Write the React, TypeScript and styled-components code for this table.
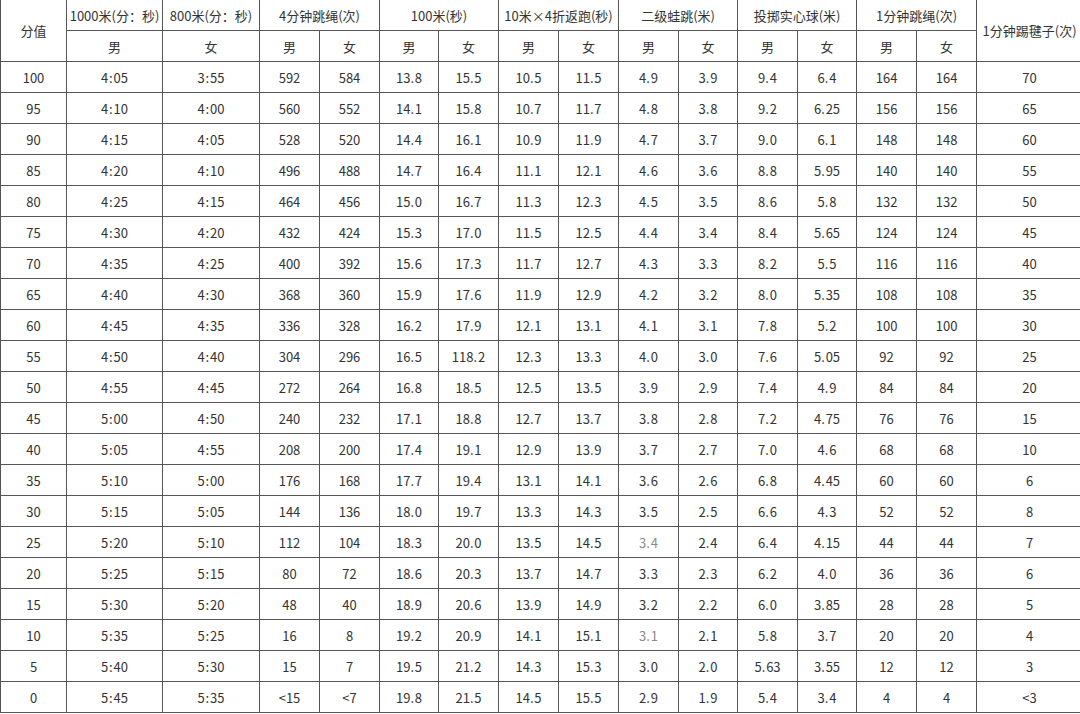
import React from 'react'
import styled, { createGlobalStyle } from 'styled-components'

const GlobalStyle = createGlobalStyle`
  html, body {
    margin: 0;
    padding: 0;
    background: #ffffff;
    overflow: hidden;
  }
  body {
    font-family: "Noto Sans CJK SC", "Noto Sans", sans-serif;
    color: #333333;
  }
`

const widths = [66, 96, 97, 60, 60, 59, 60, 60, 60, 60, 59, 60, 59, 60, 60, 106]

// light = the two cells that look paler in the scan
type Cell = string | { v: string; light: boolean }

const rows: Cell[][] = [
  ['100', '4:05', '3:55', '592', '584', '13.8', '15.5', '10.5', '11.5', '4.9', '3.9', '9.4', '6.4', '164', '164', '70'],
  ['95', '4:10', '4:00', '560', '552', '14.1', '15.8', '10.7', '11.7', '4.8', '3.8', '9.2', '6.25', '156', '156', '65'],
  ['90', '4:15', '4:05', '528', '520', '14.4', '16.1', '10.9', '11.9', '4.7', '3.7', '9.0', '6.1', '148', '148', '60'],
  ['85', '4:20', '4:10', '496', '488', '14.7', '16.4', '11.1', '12.1', '4.6', '3.6', '8.8', '5.95', '140', '140', '55'],
  ['80', '4:25', '4:15', '464', '456', '15.0', '16.7', '11.3', '12.3', '4.5', '3.5', '8.6', '5.8', '132', '132', '50'],
  ['75', '4:30', '4:20', '432', '424', '15.3', '17.0', '11.5', '12.5', '4.4', '3.4', '8.4', '5.65', '124', '124', '45'],
  ['70', '4:35', '4:25', '400', '392', '15.6', '17.3', '11.7', '12.7', '4.3', '3.3', '8.2', '5.5', '116', '116', '40'],
  ['65', '4:40', '4:30', '368', '360', '15.9', '17.6', '11.9', '12.9', '4.2', '3.2', '8.0', '5.35', '108', '108', '35'],
  ['60', '4:45', '4:35', '336', '328', '16.2', '17.9', '12.1', '13.1', '4.1', '3.1', '7.8', '5.2', '100', '100', '30'],
  ['55', '4:50', '4:40', '304', '296', '16.5', '118.2', '12.3', '13.3', '4.0', '3.0', '7.6', '5.05', '92', '92', '25'],
  ['50', '4:55', '4:45', '272', '264', '16.8', '18.5', '12.5', '13.5', '3.9', '2.9', '7.4', '4.9', '84', '84', '20'],
  ['45', '5:00', '4:50', '240', '232', '17.1', '18.8', '12.7', '13.7', '3.8', '2.8', '7.2', '4.75', '76', '76', '15'],
  ['40', '5:05', '4:55', '208', '200', '17.4', '19.1', '12.9', '13.9', '3.7', '2.7', '7.0', '4.6', '68', '68', '10'],
  ['35', '5:10', '5:00', '176', '168', '17.7', '19.4', '13.1', '14.1', '3.6', '2.6', '6.8', '4.45', '60', '60', '6'],
  ['30', '5:15', '5:05', '144', '136', '18.0', '19.7', '13.3', '14.3', '3.5', '2.5', '6.6', '4.3', '52', '52', '8'],
  ['25', '5:20', '5:10', '112', '104', '18.3', '20.0', '13.5', '14.5', { v: '3.4', light: true }, '2.4', '6.4', '4.15', '44', '44', '7'],
  ['20', '5:25', '5:15', '80', '72', '18.6', '20.3', '13.7', '14.7', '3.3', '2.3', '6.2', '4.0', '36', '36', '6'],
  ['15', '5:30', '5:20', '48', '40', '18.9', '20.6', '13.9', '14.9', '3.2', '2.2', '6.0', '3.85', '28', '28', '5'],
  ['10', '5:35', '5:25', '16', '8', '19.2', '20.9', '14.1', '15.1', { v: '3.1', light: true }, '2.1', '5.8', '3.7', '20', '20', '4'],
  ['5', '5:40', '5:30', '15', '7', '19.5', '21.2', '14.3', '15.3', '3.0', '2.0', '5.63', '3.55', '12', '12', '3'],
  ['0', '5:45', '5:35', '<15', '<7', '19.8', '21.5', '14.5', '15.5', '2.9', '1.9', '5.4', '3.4', '4', '4', '<3'],
]

const pairs = ['4分钟跳绳(次)', '100米(秒)', '10米×4折返跑(秒)', '二级蛙跳(米)', '投掷实心球(米)', '1分钟跳绳(次)']

// the scan sets a little air after each decimal point and around colons
const spaced = (s: string) => s.replace('.', '.\u200A').replace(':', '\u200A:\u200A')

function App() {
  return (
    <>
      <GlobalStyle />
      <Sheet>
        <colgroup>
          {widths.map((w, i) => (
            <col key={i} style={{ width: w }} />
          ))}
        </colgroup>
        <thead>
          <HeadRow>
            <HeadCell rowSpan={2}>分值</HeadCell>
            <HeadCell>1000米(分：秒)</HeadCell>
            <HeadCell>800米(分：秒)</HeadCell>
            {pairs.map((p) => (
              <HeadCell key={p} colSpan={2}>
                {p}
              </HeadCell>
            ))}
            <HeadCell rowSpan={2}>1分钟踢毽子(次)</HeadCell>
          </HeadRow>
          <HeadRow>
            <HeadCell>男</HeadCell>
            <HeadCell>女</HeadCell>
            {pairs.map((p) => (
              <React.Fragment key={p}>
                <HeadCell>男</HeadCell>
                <HeadCell>女</HeadCell>
              </React.Fragment>
            ))}
          </HeadRow>
        </thead>
        <tbody>
          {rows.map((r) => (
            <DataRow key={r[0] as string}>
              {r.map((c, i) =>
                typeof c === 'string' ? (
                  <DataCell key={i}>{spaced(c)}</DataCell>
                ) : (
                  <DataCell key={i} $light={c.light}>
                    {spaced(c.v)}
                  </DataCell>
                )
              )}
            </DataRow>
          ))}
        </tbody>
      </Sheet>
    </>
  )
}

export default App

const Sheet = styled.table`
  border-collapse: collapse;
  table-layout: fixed;
  width: 1082px;
  margin-top: -1px;
  font-size: 13px;
  background: #ffffff;
`

const HeadRow = styled.tr`
  height: 31px;
`

const DataRow = styled.tr`
  height: 31px;
`

const HeadCell = styled.th`
  border: 1px solid #555555;
  padding: 0;
  font-weight: 400;
  text-align: center;
  vertical-align: middle;
  color: #333333;
  white-space: nowrap;
  overflow: hidden;
`

const DataCell = styled.td<{ $light?: boolean }>`
  border: 1px solid #555555;
  padding: 0;
  text-align: center;
  vertical-align: middle;
  color: ${(p) => (p.$light ? '#8a8a8a' : '#333333')};
  white-space: nowrap;
`
